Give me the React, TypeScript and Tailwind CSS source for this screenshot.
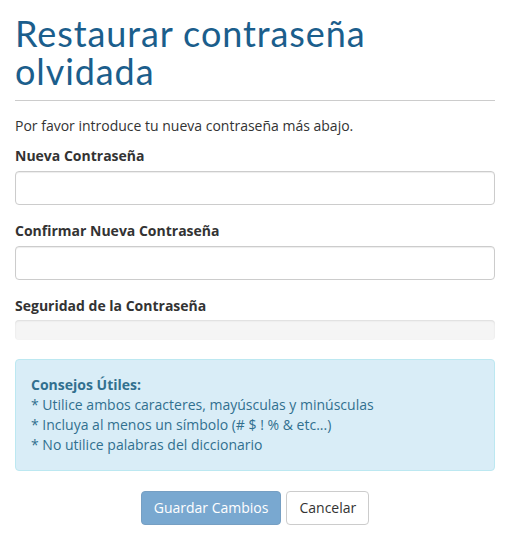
import React from "react";

export default function App() {
  return (
    <div className="bg-white w-[517px] h-[544px] px-[15px] text-[14px] text-[#333] leading-[20px]" style={{ fontFamily: '"Open Sans", sans-serif' }}>
      <h1 className="pt-[14px] text-[36px] leading-[38px] text-[#1b5e8c] font-normal tracking-[0.9px] pb-[10px] border-b border-[#cccccc] w-[480px]" style={{ fontFamily: 'Lato, sans-serif' }}>
        Restaurar contraseña
        <br />
        olvidada
      </h1>
      <p className="mt-[15px]">Por favor introduce tu nueva contraseña más abajo.</p>
      <div className="w-[480px]">
        <label className="block mt-[10px] mb-[5px] font-bold">Nueva Contraseña</label>
        <input type="password" className="block w-full h-[34px] border border-[#cccccc] rounded-[4px] shadow-[inset_0_1px_1px_rgba(0,0,0,0.075)]" />
        <label className="block mt-[16px] mb-[5px] font-bold">Confirmar Nueva Contraseña</label>
        <input type="password" className="block w-full h-[34px] border border-[#cccccc] rounded-[4px] shadow-[inset_0_1px_1px_rgba(0,0,0,0.075)]" />
        <label className="block mt-[16px] mb-[4px] font-bold">Seguridad de la Contraseña</label>
        <div className="h-[20px] bg-[#f5f5f5] rounded-[4px] shadow-[inset_0_1px_2px_rgba(0,0,0,0.1)]" />
        <div className="mt-[19px] p-[15px] bg-[#d9edf7] border border-[#bce8f1] rounded-[4px] text-[#31708f]">
          <div className="font-bold">Consejos Útiles:</div>
          <div>* Utilice ambos caracteres, mayúsculas y minúsculas</div>
          <div>* Incluya al menos un símbolo (# $ ! % &amp; etc...)</div>
          <div>* No utilice palabras del diccionario</div>
        </div>
        <div className="mt-[20px] flex justify-center gap-[5px]">
          <button className="h-[34px] px-[12px] rounded-[4px] bg-[#337ab7] opacity-65 text-white border border-[#2e6da4]">Guardar Cambios</button>
          <button className="h-[34px] px-[12px] rounded-[4px] bg-white text-[#333] border border-[#cccccc]">Cancelar</button>
        </div>
      </div>
    </div>
  );
}
